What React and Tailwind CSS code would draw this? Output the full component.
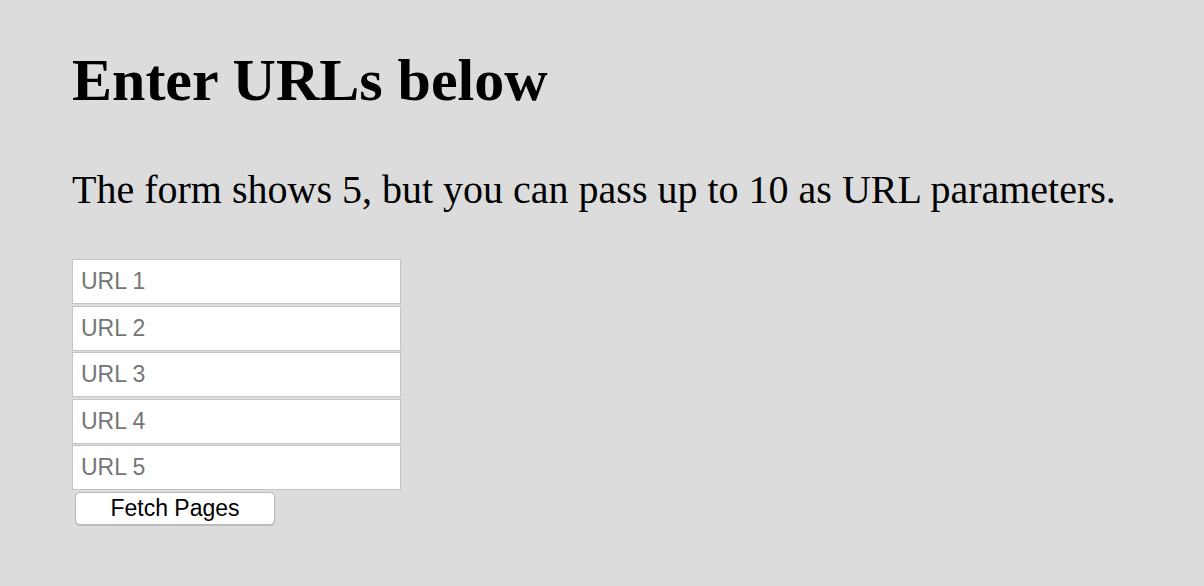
export default function App() {
  return (
    <div className="min-h-[586px] bg-[#dcdcdc] px-[72px] pt-[46px] font-['Liberation_Serif',serif] text-black">
      <h1 className="text-[60px] font-bold leading-[68px]">Enter URLs below</h1>
      <p className="mt-[53px] text-[40px] leading-[46px]">
        The form shows 5, but you can pass up to 10 as URL parameters.
      </p>
      <form className="mt-[46px] flex w-[329px] flex-col gap-[1.5px]">
        {[1, 2, 3, 4, 5].map((n) => (
          <input
            key={n}
            type="text"
            placeholder={`URL ${n}`}
            className="h-[45px] w-full border border-[#c4c4c4] bg-white px-[8px] font-['Liberation_Sans',sans-serif] text-[23px] text-black outline-none placeholder:text-[#757575]"
          />
        ))}
        <button
          type="button"
          className="ml-[3px] h-[33px] w-[200px] rounded-[5px] border border-[#b8b8b8] bg-white font-['Liberation_Sans',sans-serif] text-[23px] leading-none text-black shadow-[0_1px_1px_rgba(0,0,0,0.15)]"
        >
          Fetch Pages
        </button>
      </form>
    </div>
  );
}
